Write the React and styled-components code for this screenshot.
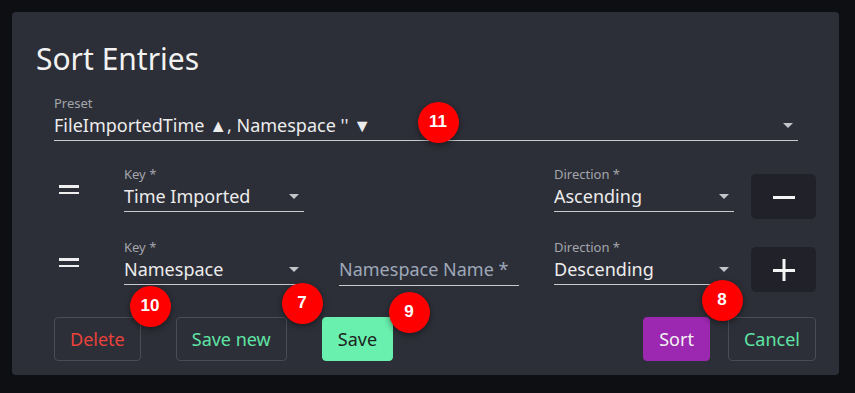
import React from "react";
import styled, { createGlobalStyle } from "styled-components";

const Global = createGlobalStyle`
  html, body { margin: 0; padding: 0; background: #0e0f12; }
  body { font-family: "Noto Sans", "Open Sans", sans-serif; }
  * { box-sizing: border-box; }
`;

const Page = styled.div`
  width: 855px;
  height: 393px;
  padding: 12px 16px 18px 12px;
  background: #0e0f12;
`;

const Dialog = styled.div`
  width: 827px;
  height: 363px;
  background: #2d2f38;
  border-radius: 4px;
  display: flex;
  flex-direction: column;
  color: #ececec;
  position: relative;
`;

const Title = styled.h2`
  margin: 0;
  padding: 25px 0 0 24px;
  font-size: 30px;
  font-weight: 400;
  line-height: 44px;
  color: #f2f2f2;
`;

const Content = styled.div`
  padding: 13px 23px 0 42px;
  display: flex;
  flex-direction: column;
`;

const Field = styled.div`
  display: flex;
  flex-direction: column;
  width: ${(p) => p.$w || "180px"};
  position: relative;
`;

const Label = styled.span`
  font-size: 13px;
  line-height: 18px;
  height: 18px;
  color: #a3a5ab;
`;

const Select = styled.div`
  display: flex;
  align-items: center;
  justify-content: space-between;
  height: 29px;
  border-bottom: 1px solid #c9cacd;
  font-size: 18px;
  color: #ececec;
  white-space: nowrap;
  padding-bottom: 2px;
`;

const Placeholder = styled.div`
  display: flex;
  align-items: center;
  height: 30px;
  border-bottom: 1px solid #c9cacd;
  font-size: 18px;
  color: #9ea8b8;
  padding-bottom: 4px;
  margin-bottom: -1px;
`;

const Arrow = styled.span`
  width: 0;
  height: 0;
  border-left: 5px solid transparent;
  border-right: 5px solid transparent;
  border-top: 5px solid #c4c5c9;
  margin-right: 5px;
`;

const Rows = styled.div`
  display: flex;
  flex-direction: column;
  gap: 26px;
  margin-top: 24px;
`;

const Row = styled.div`
  display: grid;
  grid-template-columns: 35px 180px 180px 180px 65px;
  column-gap: 35px;
  align-items: end;
  & > :last-child { margin-left: -18px; }
`;

const Handle = styled.div`
  padding-left: 5px;
  align-self: center;
  margin-top: 2px;
  display: flex;
  flex-direction: column;
  gap: 4px;
  & > span {
    display: block;
    width: 20px;
    height: 2.5px;
    background: #efefef;
  }
`;

const IconBtn = styled.div`
  width: 65px;
  height: 45px;
  background: #202129;
  border-radius: 5px;
  display: flex;
  align-items: center;
  justify-content: center;
  margin-bottom: -7px;
`;

const Actions = styled.div`
  display: flex;
  align-items: center;
  margin-top: 32px;
  gap: 35px;
`;

const Spacer = styled.div`
  flex: 1;
`;

const Btn = styled.div`
  height: 44px;
  padding: 0 ${(p) => p.$px || "15px"};
  display: flex;
  align-items: center;
  justify-content: center;
  font-size: 18px;
  border-radius: 4px;
  border: 1px solid ${(p) => (p.$bg ? p.$bg : "#4a4c55")};
  background: ${(p) => p.$bg || "transparent"};
  color: ${(p) => p.$color};
  margin-left: ${(p) => p.$ml || "0"};
`;

const Badge = styled.div`
  position: absolute;
  width: 41px;
  height: 41px;
  border-radius: 50%;
  background: #fe0000;
  color: #fff;
  font-family: "Liberation Sans", Arial, sans-serif;
  font-weight: 700;
  font-size: 17px;
  display: flex;
  align-items: center;
  justify-content: center;
  box-shadow: 0 2px 6px rgba(0, 0, 0, 0.45);
  left: ${(p) => p.$x - 20.5 - 12}px;
  top: ${(p) => p.$y - 20.5 - 12}px;
  z-index: 2;
`;

const Minus = () => (
  <svg width="22" height="22" viewBox="0 0 22 22">
    <rect x="0" y="10" width="22" height="3" fill="#f5f5f5" />
  </svg>
);

const Plus = () => (
  <svg width="22" height="22" viewBox="0 0 22 22">
    <rect x="0" y="10" width="22" height="3" fill="#f5f5f5" />
    <rect x="9.5" y="0" width="3" height="22" fill="#f5f5f5" />
  </svg>
);

export default function App() {
  return (
    <>
      <Global />
      <Page>
        <Dialog>
          <Title>Sort Entries</Title>
          <Content>
            <Field $w="744px">
              <Label>Preset</Label>
              <Select>
                <span>FileImportedTime ▲, Namespace '' ▼</span>
                <Arrow />
              </Select>
            </Field>
            <Rows>
              <Row>
                <Handle>
                  <span />
                  <span />
                </Handle>
                <Field>
                  <Label>Key *</Label>
                  <Select>
                    <span>Time Imported</span>
                    <Arrow />
                  </Select>
                </Field>
                <div />
                <Field>
                  <Label>Direction *</Label>
                  <Select>
                    <span>Ascending</span>
                    <Arrow />
                  </Select>
                </Field>
                <IconBtn>
                  <Minus />
                </IconBtn>
              </Row>
              <Row>
                <Handle>
                  <span />
                  <span />
                </Handle>
                <Field>
                  <Label>Key *</Label>
                  <Select>
                    <span>Namespace</span>
                    <Arrow />
                  </Select>
                </Field>
                <Field>
                  <Placeholder>Namespace Name *</Placeholder>
                </Field>
                <Field>
                  <Label>Direction *</Label>
                  <Select>
                    <span>Descending</span>
                    <Arrow />
                  </Select>
                </Field>
                <IconBtn>
                  <Plus />
                </IconBtn>
              </Row>
            </Rows>
            <Actions>
              <Btn $color="#e9413b">Delete</Btn>
              <Btn $color="#5fe3a4">Save new</Btn>
              <Btn $bg="#69f0ae" $color="#1c2420">Save</Btn>
              <Spacer />
              <Btn $bg="#9c27b0" $color="#f3f3f3">Sort</Btn>
              <Btn $color="#5fe3a4" $ml="-17px">Cancel</Btn>
            </Actions>
          </Content>
          <Badge $x={438} $y={122}>11</Badge>
          <Badge $x={150} $y={306}>10</Badge>
          <Badge $x={302} $y={303}>7</Badge>
          <Badge $x={409} $y={312}>9</Badge>
          <Badge $x={722} $y={300}>8</Badge>
        </Dialog>
      </Page>
    </>
  );
}
